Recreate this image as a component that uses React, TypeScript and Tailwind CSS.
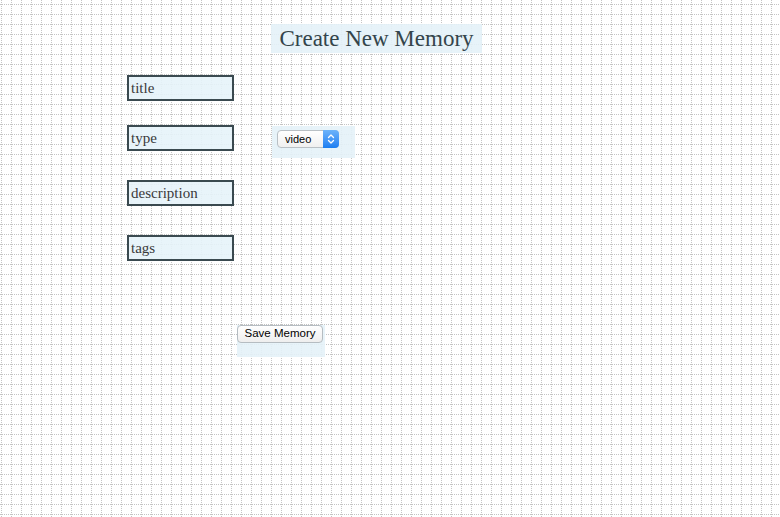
// Create New Memory form, on a dotted grid page.

const GRID =
  "[background-image:conic-gradient(from_270deg_at_1px_1px,#c4c4c4_90deg,transparent_0),conic-gradient(from_270deg_at_1px_1px,#c4c4c4_90deg,transparent_0)] [background-size:10px_2px,2px_10px] [background-position:1px_0,0_4px]";

const FIELDS = [
  { name: "title", top: "mt-[22px]" },
  { name: "type", top: "mt-[24px]" },
  { name: "description", top: "mt-[29px]" },
  { name: "tags", top: "mt-[29px]" },
];

function Field({ name }: { name: string }) {
  return (
    <input
      type="text"
      placeholder={name}
      className="h-[26px] w-[107px] shrink-0 border-2 border-[#3a4a50] bg-[#e6f3f9]/90 px-[2px] font-['Liberation_Serif',Georgia,serif] text-[15px] text-[#333] outline-none placeholder:text-[#3a3a3a]"
    />
  );
}

function TypeSelect() {
  return (
    <div className="ml-[38px] mt-[1px] h-[32px] w-[83px] shrink-0 bg-[#e4f2f8]/90 pl-[5px] pt-[4px]">
      <div
        role="combobox"
        aria-label="type"
        className="flex h-[18px] w-[62px] items-center rounded-[4px] border border-[#b9c0c5] bg-gradient-to-b from-white to-[#f0f0f0]"
      >
        <span className="flex-1 pl-[7px] font-['Liberation_Sans',Arial,sans-serif] text-[11px] leading-none text-black">
          video
        </span>
        <span className="-mr-px -my-px flex h-[18px] w-[16px] items-center justify-center rounded-r-[4px] bg-gradient-to-b from-[#6cb3fa] to-[#1a7ef1]">
          <svg width="8" height="12" viewBox="0 0 8 12" fill="none">
            <path d="M1.5 4.5 4 2l2.5 2.5M1.5 7.5 4 10l2.5-2.5" stroke="#fff" strokeWidth="1.3" strokeLinecap="round" strokeLinejoin="round" />
          </svg>
        </span>
      </div>
    </div>
  );
}

export default function App() {
  return (
    <div className={`min-h-screen w-full bg-white ${GRID}`}>
      <div className="flex flex-col pt-[24px]">
        <div className="ml-[271px] flex h-[29px] w-[211px] items-center justify-center bg-[#e4f2f8]/90">
          <h1 className="font-['Liberation_Serif',Georgia,serif] text-[23px] leading-none text-[#34454b]">
            Create New Memory
          </h1>
        </div>

        <form className="ml-[127px] flex flex-col" onSubmit={(e) => e.preventDefault()}>
          {FIELDS.map((f) => (
            <div key={f.name} className={`flex h-[26px] items-start ${f.top}`}>
              <Field name={f.name} />
              {f.name === "type" && <TypeSelect />}
            </div>
          ))}

          <div className="ml-[110px] mt-[64px] h-[32px] w-[88px] bg-[#e4f2f8]/90">
            <button
              type="submit"
              className="block h-[18px] w-[86px] rounded-[4px] border border-[#b5bcc1] bg-gradient-to-b from-white to-[#eeeeee] font-['Liberation_Sans',Arial,sans-serif] text-[11.5px] leading-none text-black"
            >
              Save Memory
            </button>
          </div>
        </form>
      </div>
    </div>
  );
}
